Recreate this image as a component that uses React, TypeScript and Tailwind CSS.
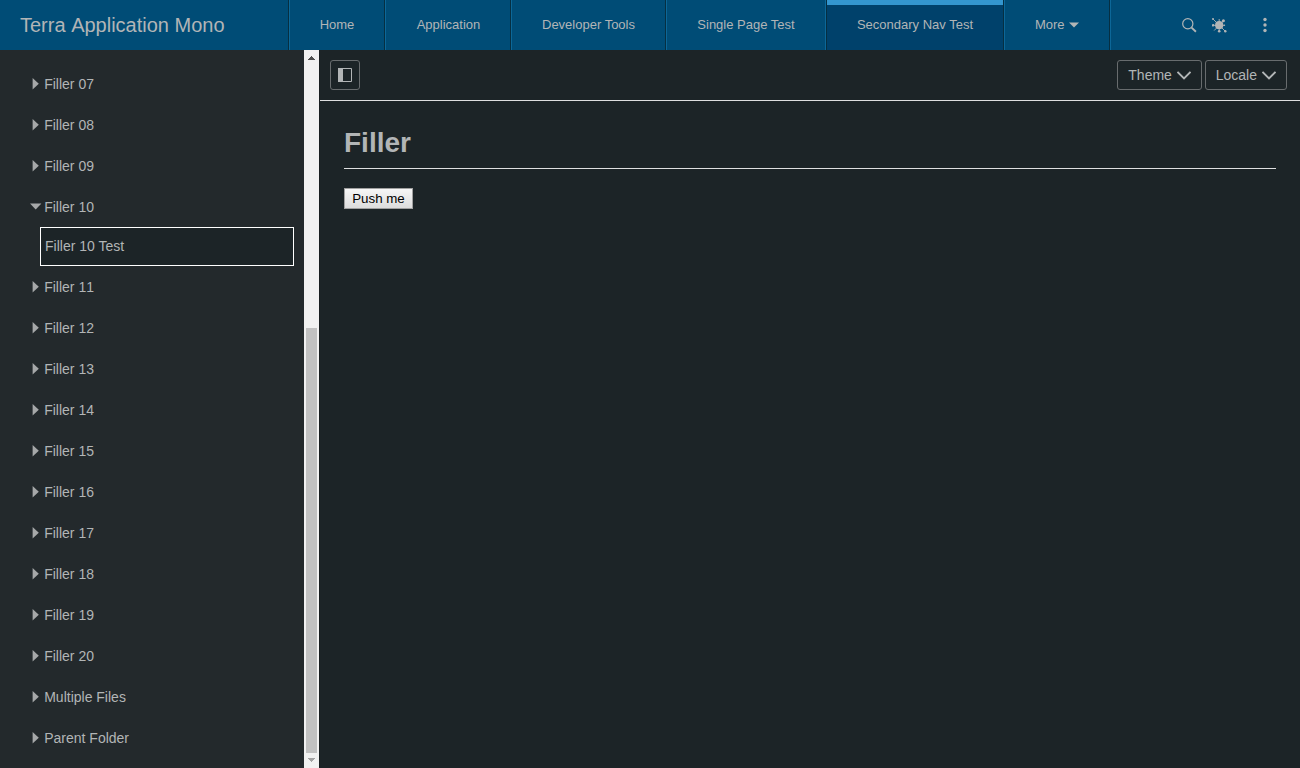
const tabs = [
  { label: "Home", w: "w-[96px]" },
  { label: "Application", w: "w-[126px]", nudge: "pl-px" },
  { label: "Developer Tools", w: "w-[155px]" },
  { label: "Single Page Test", w: "w-[160px]", beforeActive: true },
  { label: "Secondary Nav Test", w: "w-[178px]", active: true },
  { label: "More", w: "w-[106px]", caret: true },
];

const before = ["Filler 07", "Filler 08", "Filler 09"];
const after = [
  "Filler 11", "Filler 12", "Filler 13", "Filler 14", "Filler 15", "Filler 16",
  "Filler 17", "Filler 18", "Filler 19", "Filler 20", "Multiple Files", "Parent Folder",
];

function Row({ label, open = false }: { label: string; open?: boolean }) {
  return (
    <li className={`flex items-center pl-[30px] ${open ? "h-[40px] pt-[1px]" : "h-[41px]"}`}>
      <svg className="mr-[4.2px] mb-[2px] h-[14px] w-[10px] shrink-0 overflow-visible" viewBox="0 0 10 14" fill="#a6a8a9">
        {open ? <path d="M0 3.6h11.4L5.7 9.4z" /> : <path d="M2.6 1v11.6L8.8 6.8z" />}
      </svg>
      <span className={label.endsWith("11") ? "[font-kerning:none]" : ""}>{label}</span>
    </li>
  );
}

function MenuButton({ label, w, pad }: { label: string; w: string; pad: string }) {
  return (
    <button className={`flex h-[30px] items-center rounded-[3px] border border-[#686c6e] text-[14px] ${w} ${pad}`}>
      {label}
      <svg className="ml-[4.8px] h-[14px] w-[14px]" viewBox="0 0 14 14" fill="none" stroke="#b2b5b6" strokeWidth="1.9">
        <path d="M.5 3.8 7 10.3l6.5-6.5" />
      </svg>
    </button>
  );
}

export default function App() {
  return (
    <div className="flex h-screen w-full flex-col overflow-hidden bg-[#1c2427] font-['Liberation_Sans',Arial,sans-serif] text-[14px] text-[#b2b5b6]">
      <header className="flex h-[50px] shrink-0 bg-[#004c76]">
        <div className="flex w-[289px] items-center border-r border-[#062f42] pl-[20px] text-[20px]">
          <span className="whitespace-pre">Terra </span>
          <span>Application Mono</span>
        </div>
        <nav className="flex border-r border-[#0c6798] text-[13px]">
          {tabs.map((t) => (
            <div
              key={t.label}
              className={`flex items-center justify-center border-x pb-px ${t.w} ${t.nudge ?? ""} ${
                t.beforeActive ? "border-r-[#0c6798]" : "border-r-[#062f42]"
              } ${
                t.active
                  ? "border-l-[#062f42] bg-[#00416b] bg-[linear-gradient(#3496cf_5px,transparent_5px)]"
                  : "border-l-[#0c6798]"
              }`}
            >
              {t.label}
              {t.caret && (
                <svg className="ml-[4.5px] h-[6px] w-[10px]" viewBox="0 0 10 6" fill="#b2b5b6">
                  <path d="M0 .5h10L5 5.6z" />
                </svg>
              )}
            </div>
          ))}
        </nav>
        <div className="ml-auto flex items-center pr-[28px]">
          <svg className="mr-[15px] h-[15px] w-[15px]" viewBox="0 0 15 15" fill="none" stroke="#b2b5b6">
            <circle cx="5.8" cy="5.8" r="5.1" strokeWidth="1.2" />
            <path d="m9.6 9.6 4.3 4.1" strokeWidth="1.9" />
          </svg>
          <svg className="mr-[31px] h-[15px] w-[15px]" viewBox="0 0 15 15" fill="#b2b5b6">
            <path
              d="m1 1 12 12M11.5 2.8 2.2 12.5M.8 7.3h11.5M7.2 1v12"
              stroke="#b2b5b6"
              strokeWidth=".9"
            />
            <circle cx="7.2" cy="7.2" r="4.1" />
            <circle cx="1" cy="1.1" r="1" />
            <circle cx="11.4" cy="2.7" r="1.5" />
            <circle cx="1.1" cy="7.3" r="1.2" />
            <circle cx="13.3" cy="13.3" r="1.2" />
            <circle cx="7.2" cy="13.2" r="1.3" />
            <circle cx="12.4" cy="7.3" r=".8" />
          </svg>
          <svg className="h-[16px] w-[14px]" viewBox="0 0 14 16" fill="#b2b5b6">
            <circle cx="7" cy="2.5" r="1.7" />
            <circle cx="7" cy="8" r="1.7" />
            <circle cx="7" cy="13.5" r="1.7" />
          </svg>
        </div>
      </header>

      <div className="flex min-h-0 flex-1">
        <aside className="flex w-[320px] shrink-0 border-r border-[#181e20]">
          <ul className="w-[304px] bg-[#23292c] pt-[14px]">
            {before.map((l) => <Row key={l} label={l} />)}
            <Row label="Filler 10" open />
            <li className="mr-[10px] mb-px ml-[40px] flex h-[39px] items-center border border-white bg-[#1c2427] pl-[4px]">
              Filler 10 Test
            </li>
            {after.map((l) => <Row key={l} label={l} />)}
          </ul>
          <div className="flex w-[15px] flex-col items-center bg-[#f1f1f1]">
            <svg className="h-[15px] w-[15px]" viewBox="0 0 15 15" fill="#505050" shapeRendering="crispEdges">
              <path d="M4 10h7V9h-1V8H9V7H8V6H7v1H6v1H5v1H4z" />
            </svg>
            <div className="mt-[263px] h-[425px] w-[11px] bg-[#c1c1c1]" />
            <svg className="h-[15px] w-[15px]" viewBox="0 0 15 15" fill="#a3a3a3" shapeRendering="crispEdges">
              <path d="M4 5h7v1h-1v1H9v1H8v1H7V8H6V7H5V6H4z" />
            </svg>
          </div>
        </aside>

        <main className="flex-1">
          <div className="flex h-[51px] items-center border-b border-[#dedfe0] pr-[13px] pl-[10px]">
            <button className="flex h-[30px] w-[30px] items-center justify-center rounded-[3px] border border-[#686c6e]">
              <svg className="h-[14px] w-[14px]" viewBox="0 0 14 14" fill="#b2b5b6">
                <path d="M0 0h5v14H0z" />
                <path d="M.5.5h13v13H.5z" fill="none" stroke="#b2b5b6" />
              </svg>
            </button>
            <div className="ml-auto flex gap-[3px]">
              <MenuButton label="Theme" w="w-[85px]" pad="pl-[10.3px]" />
              <MenuButton label="Locale" w="w-[82px]" pad="pl-[9.7px]" />
            </div>
          </div>
          <div className="px-[24px]">
            <h1 className="mb-[19px] h-[68px] border-b border-[#dedfe0] pt-[25px] text-[28px] leading-[34px] font-bold">Filler</h1>
            <button className="flex h-[21px] w-[69px] items-center justify-center border border-[#a0a0a0] bg-gradient-to-b from-[#f6f6f6] to-[#dddddd] text-[13.333px] text-black">
              Push me
            </button>
          </div>
        </main>
      </div>
    </div>
  );
}
